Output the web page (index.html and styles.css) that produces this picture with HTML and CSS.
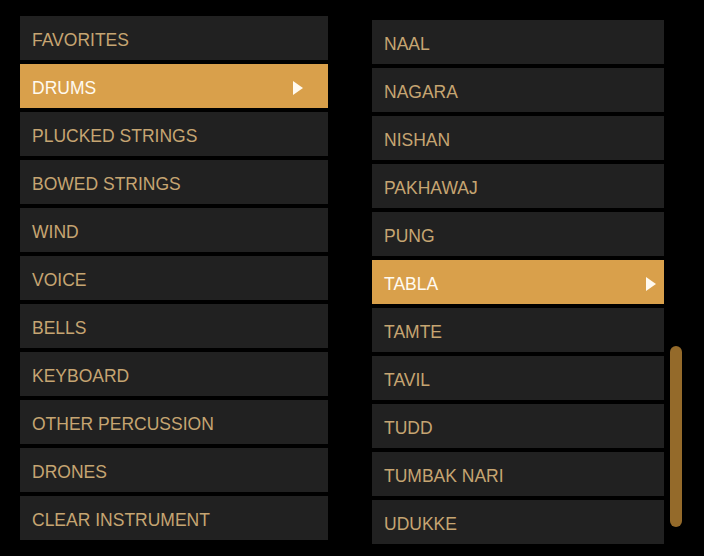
FILE: index.html
```html
<!DOCTYPE html>
<html lang="en">
<head>
    <meta charset="UTF-8">
    <meta name="viewport" content="width=device-width, initial-scale=1.0">
    <title>Instrument Browser</title>
    <link rel="stylesheet" href="styles.css">
</head>
<body>
    <div class="browser">
        <ul class="list categories">
            <li class="item">FAVORITES</li>
            <li class="item active">DRUMS <span class="arrow"></span></li>
            <li class="item">PLUCKED STRINGS</li>
            <li class="item">BOWED STRINGS</li>
            <li class="item">WIND</li>
            <li class="item">VOICE</li>
            <li class="item">BELLS</li>
            <li class="item">KEYBOARD</li>
            <li class="item">OTHER PERCUSSION</li>
            <li class="item">DRONES</li>
            <li class="item">CLEAR INSTRUMENT</li>
        </ul>
        <div class="instruments">
            <ul class="list">
                <li class="item">NAAL</li>
                <li class="item">NAGARA</li>
                <li class="item">NISHAN</li>
                <li class="item">PAKHAWAJ</li>
                <li class="item">PUNG</li>
                <li class="item active">TABLA <span class="arrow"></span></li>
                <li class="item">TAMTE</li>
                <li class="item">TAVIL</li>
                <li class="item">TUDD</li>
                <li class="item">TUMBAK NARI</li>
                <li class="item">UDUKKE</li>
            </ul>
            <div class="scrollbar"><div class="thumb"></div></div>
        </div>
    </div>
</body>
</html>
```
FILE: styles.css
```css
body {
    margin: 0;
    background-color: #000;
    font-family: "Liberation Sans", Arial, sans-serif;
    width: 704px;
    height: 556px;
    overflow: hidden;
}
.browser {
    display: flex;
    align-items: flex-start;
    gap: 44px;
    padding: 16px 0 0 20px;
}
.list {
    list-style: none;
    margin: 0;
    padding: 0;
    display: flex;
    flex-direction: column;
    gap: 4px;
}
.categories {
    width: 308px;
}
.instruments {
    display: flex;
    gap: 6px;
    margin-top: 4px;
}
.instruments .list {
    width: 292px;
}
.item {
    height: 44px;
    box-sizing: border-box;
    padding: 5px 8px 0 12px;
    display: flex;
    align-items: center;
    justify-content: space-between;
    background-color: #212121;
    color: #c6a572;
    font-size: 17.5px;
}
.item.active {
    background-color: #d9a04b;
    color: #fffaf0;
}
.arrow {
    width: 0;
    height: 0;
    margin-top: -1px;
    border-left: 10px solid #fffaf0;
    border-top: 7.5px solid transparent;
    border-bottom: 7.5px solid transparent;
}
.categories .arrow {
    margin-right: 17px;
}
.scrollbar {
    width: 12px;
}
.thumb {
    margin-top: 326px;
    height: 181px;
    background-color: #946a2a;
    border-radius: 6px;
}
```
